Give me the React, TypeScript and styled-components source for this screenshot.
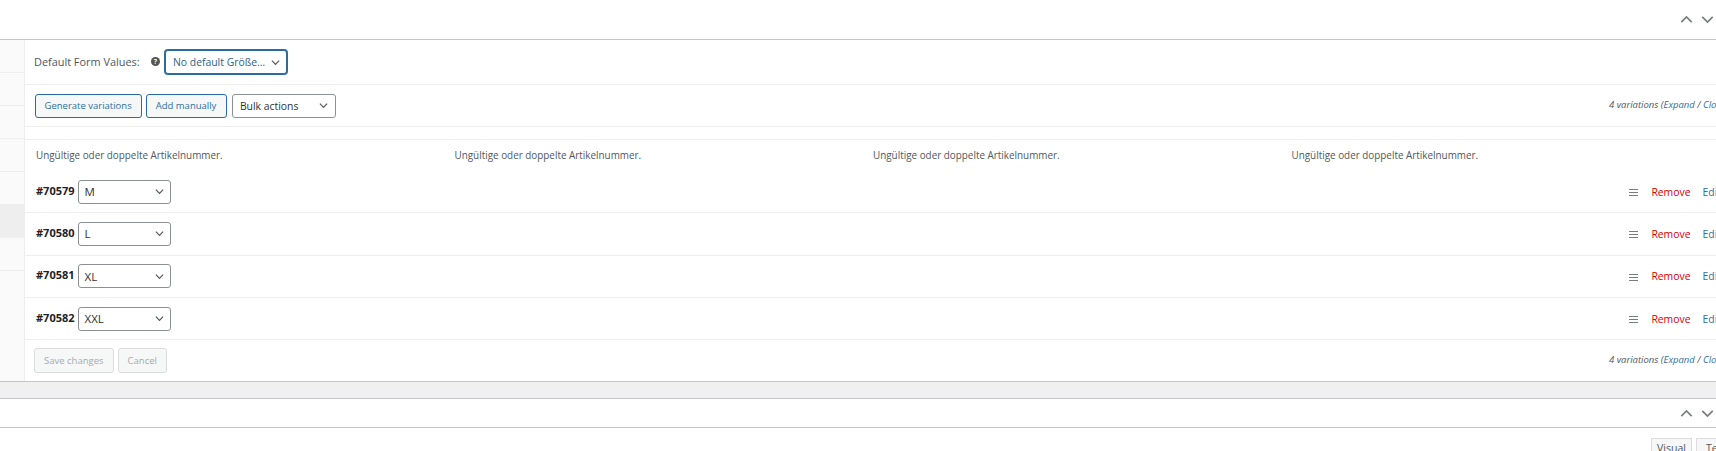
import styled, { createGlobalStyle } from "styled-components";

const GlobalStyle = createGlobalStyle`
  html, body {
    margin: 0;
    padding: 0;
    background: #fff;
  }
  body {
    font-family: "Open Sans", "Noto Sans", sans-serif;
    font-size: 11px;
    color: #50575e;
  }
`;

const sizes = ["M", "L", "XL", "XXL"];
const ids = ["70579", "70580", "70581", "70582"];
const tabs = [false, false, false, false, false, true, false];
const columns = [0, 1, 2, 3];

const Chevron = ({ up, size = 9 }: { up?: boolean; size?: number }) => (
  <svg width={size} height={size} viewBox="0 0 10 10" fill="none" stroke="currentColor" strokeWidth="1.3">
    <path d={up ? "M1 7l4-4 4 4" : "M1 3l4 4 4-4"} />
  </svg>
);

const Counter = () => (
  <CountText>
    4 variations (<a>Expand</a> / <a>Close</a>)
  </CountText>
);

const App = () => {
  return (
    <Page>
      <GlobalStyle />
      <Canvas>
        <HandleBar $height={39}>
          <Chevron up size={13} />
          <Chevron size={13} />
        </HandleBar>
        <Panel>
          <Sidebar>
            {tabs.map((active, i) => (
              <SideTab key={i} $active={active} />
            ))}
          </Sidebar>
          <Main>
            <DefaultsRow>
              <FormLabel>Default Form Values:</FormLabel>
              <HelpDot>?</HelpDot>
              <FocusSelect>
                <SelectText>No default Größe…</SelectText>
                <Chevron />
              </FocusSelect>
            </DefaultsRow>
            <Toolbar>
              <ToolGroup>
                <OutlineButton>Generate variations</OutlineButton>
                <OutlineButton>Add manually</OutlineButton>
                <BulkSelect>
                  <SelectText>Bulk actions</SelectText>
                  <Chevron />
                </BulkSelect>
              </ToolGroup>
              <Counter />
            </Toolbar>
            <Spacer />
            <Messages>
              {columns.map((c) => (
                <span key={c}>Ungültige oder doppelte Artikelnummer.</span>
              ))}
            </Messages>
            {sizes.map((size, i) => (
              <VariationRow key={size}>
                <RowLeft>
                  <VariationId>#{ids[i]}</VariationId>
                  <SizeSelect>
                    <SelectText>{size}</SelectText>
                    <Chevron />
                  </SizeSelect>
                </RowLeft>
                <RowActions>
                  <DragIcon width="9" height="7" viewBox="0 0 9 7" fill="currentColor">
                    <rect y="0" width="9" height="1" />
                    <rect y="3" width="9" height="1" />
                    <rect y="6" width="9" height="1" />
                  </DragIcon>
                  <RemoveLink>Remove</RemoveLink>
                  <EditLink>Edit</EditLink>
                </RowActions>
              </VariationRow>
            ))}
            <Footer>
              <ToolGroup>
                <DisabledButton>Save changes</DisabledButton>
                <DisabledButton>Cancel</DisabledButton>
              </ToolGroup>
              <Counter />
            </Footer>
          </Main>
        </Panel>
        <Band />
        <HandleBar $height={28}>
          <Chevron up size={13} />
          <Chevron size={13} />
        </HandleBar>
        <EditorTabs>
          <EditorTab>Visual</EditorTab>
          <EditorTab>Text</EditorTab>
        </EditorTabs>
      </Canvas>
    </Page>
  );
};

const Page = styled.div`
  width: 1716px;
  height: 451px;
  overflow: hidden;
`;

/* the admin page is wider than the window, the right edge gets cut */
const Canvas = styled.div`
  width: 1745px;
`;

const HandleBar = styled.div<{ $height: number }>`
  height: ${(p) => p.$height}px;
  border-bottom: 1px solid #c3c4c7;
  display: flex;
  align-items: center;
  justify-content: flex-end;
  gap: 8px;
  padding-right: 31px;
  color: #787c82;
`;

const Panel = styled.div`
  display: flex;
  height: 341px;
`;

const Sidebar = styled.div`
  width: 24px;
  flex: none;
  background: #fafafa;
  border-right: 1px solid #eee;
`;

const SideTab = styled.div<{ $active: boolean }>`
  height: 32px;
  border-bottom: 1px solid #eee;
  background: ${(p) => (p.$active ? "#eee" : "transparent")};
`;

const Main = styled.div`
  flex: 1;
  min-width: 0;
`;

const DefaultsRow = styled.div`
  height: 44px;
  border-bottom: 1px solid #eee;
  display: flex;
  align-items: center;
  padding-left: 9px;
`;

const FormLabel = styled.span`
  font-size: 10.9px;
  width: 117px;
  margin-bottom: 2px;
`;

const HelpDot = styled.span`
  width: 9px;
  height: 9px;
  border-radius: 50%;
  background: #555;
  color: #fff;
  font-size: 7px;
  font-weight: 700;
  line-height: 9px;
  text-align: center;
  margin-right: 5px;
  margin-bottom: 1px;
`;

const SelectBase = styled.div`
  box-sizing: border-box;
  height: 24px;
  display: flex;
  align-items: center;
  justify-content: space-between;
  background: #fff;
  border: 1px solid #8c8f94;
  border-radius: 3px;
  font-size: 10.4px;
  color: #2c3338;
  padding: 0 7px;

  svg {
    flex: none;
    color: #50575e;
  }
`;

const SelectText = styled.span`
  white-space: nowrap;
`;

const FocusSelect = styled(SelectBase)`
  width: 122px;
  border: 1px solid #2a6c9e;
  box-shadow: 0 0 0 1px #2a6c9e;
  color: #2b5f85;
  padding-right: 6px;
`;

const Toolbar = styled.div`
  height: 41px;
  border-bottom: 1px solid #eee;
  display: flex;
  align-items: center;
  justify-content: space-between;
  padding-left: 10px;
  padding-right: 17px;
`;

const ToolGroup = styled.div`
  display: flex;
  gap: 4px;
`;

const OutlineButton = styled.div`
  box-sizing: border-box;
  height: 24px;
  line-height: 21px;
  padding: 0 9.5px 0 8.5px;
  border: 1px solid #2a6c9e;
  border-radius: 3px;
  background: #f6f7f7;
  color: #2f6f9f;
  font-size: 9.5px;
`;

const BulkSelect = styled(SelectBase)`
  width: 104px;
  margin-left: 1px;
`;

const CountText = styled.div`
  font-size: 9.5px;
  font-style: italic;
  color: #50575e;
  margin-bottom: 2px;

  a {
    color: #2f6f9f;
  }
`;

const Spacer = styled.div`
  height: 12px;
  border-bottom: 1px solid #eee;
`;

const Messages = styled.div`
  box-sizing: border-box;
  height: 31px;
  display: grid;
  grid-template-columns: repeat(4, 418.5px);
  align-items: center;
  padding-left: 11px;
  padding-bottom: 2px;
  font-size: 9.9px;
  color: #50575e;
`;

const VariationRow = styled.div`
  box-sizing: border-box;
  height: 42.33px;
  border-bottom: 1px solid #eee;
  display: flex;
  align-items: center;
  justify-content: space-between;
  padding-left: 11px;
  padding-right: 24px;
`;

const RowLeft = styled.div`
  display: flex;
  align-items: center;
  gap: 3px;
`;

const VariationId = styled.strong`
  font-size: 11px;
  color: #1d2327;
  margin-top: -3px;
`;

const SizeSelect = styled(SelectBase)`
  width: 93px;
  padding: 0 6px;
  font-size: 11.5px;
`;

const RowActions = styled.div`
  display: flex;
  align-items: center;
  font-size: 10.4px;
`;

const DragIcon = styled.svg`
  color: #787c82;
  margin-right: 13px;
  margin-top: 2px;
`;

const RemoveLink = styled.a`
  color: #d90000;
  margin-right: 12px;
`;

const EditLink = styled.a`
  color: #2f6f9f;
`;

const Footer = styled.div`
  height: 40.68px;
  display: flex;
  align-items: center;
  justify-content: space-between;
  padding-left: 9px;
  padding-right: 17px;
`;

const DisabledButton = styled.div`
  box-sizing: border-box;
  height: 25px;
  line-height: 23px;
  padding: 0 9px;
  border: 1px solid #dcdcde;
  border-radius: 3px;
  background: #f6f7f7;
  color: #a7aaad;
  font-size: 9.5px;
`;

const Band = styled.div`
  height: 16px;
  background: #f0f0f1;
  border-top: 1px solid #c3c4c7;
  border-bottom: 1px solid #c3c4c7;
`;

const EditorTabs = styled.div`
  display: flex;
  justify-content: flex-end;
  gap: 4px;
  padding-top: 10px;
  padding-right: 8px;
`;

const EditorTab = styled.div`
  box-sizing: border-box;
  width: 41px;
  height: 30px;
  padding-top: 2px;
  text-align: center;
  background: #f6f7f7;
  border: 1px solid #dcdcde;
  font-size: 10.5px;
  color: #50575e;
`;

export default App;
